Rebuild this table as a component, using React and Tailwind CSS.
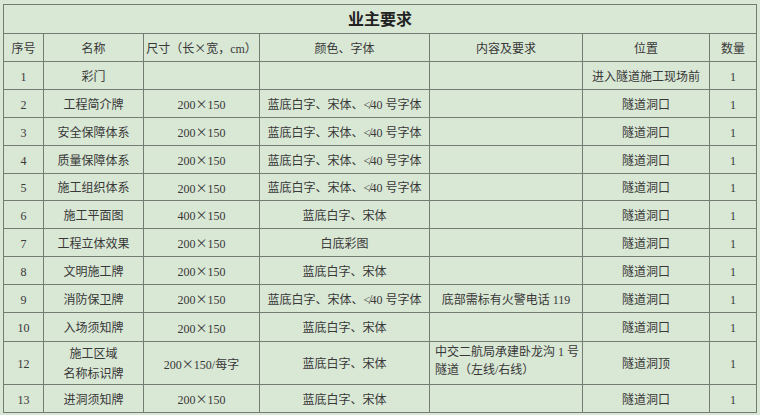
const X = () => (
  <span style={{ fontFamily: '"Noto Sans CJK SC", sans-serif' }}>×</span>
);

function Size({ v }) {
  if (!v) return null;
  const parts = v.split("×");
  return (
    <>
      {parts[0]}
      <X />
      {parts[1]}
    </>
  );
}

export default function App() {
  const rows = [
    ["1", "彩门", "", "", "", "进入隧道施工现场前", "1", 28],
    ["2", "工程简介牌", "200×150", "蓝底白字、宋体、≮40 号字体", "", "隧道洞口", "1", 28],
    ["3", "安全保障体系", "200×150", "蓝底白字、宋体、≮40 号字体", "", "隧道洞口", "1", 28],
    ["4", "质量保障体系", "200×150", "蓝底白字、宋体、≮40 号字体", "", "隧道洞口", "1", 28],
    ["5", "施工组织体系", "200×150", "蓝底白字、宋体、≮40 号字体", "", "隧道洞口", "1", 27],
    ["6", "施工平面图", "400×150", "蓝底白字、宋体", "", "隧道洞口", "1", 28],
    ["7", "工程立体效果", "200×150", "白底彩图", "", "隧道洞口", "1", 28],
    ["8", "文明施工牌", "200×150", "蓝底白字、宋体", "", "隧道洞口", "1", 28],
    ["9", "消防保卫牌", "200×150", "蓝底白字、宋体、≮40 号字体", "底部需标有火警电话 119", "隧道洞口", "1", 28],
    ["10", "入场须知牌", "200×150", "蓝底白字、宋体", "", "隧道洞口", "1", 29],
  ];
  const td = "border border-[#737b72] text-center align-middle p-0 pt-[2px]";
  return (
    <div
      className="w-[760px] h-[415px] bg-[#d9e7d5] pl-[3px] pt-[4px] text-[#383838] text-[12px] overflow-hidden"
      style={{ fontFamily: '"Liberation Serif", "Noto Sans CJK SC", serif' }}
    >
      <table className="table-fixed border-collapse w-[753px] border border-[#6b7369]">
        <colgroup>
          <col className="w-[40px]" />
          <col className="w-[100px]" />
          <col className="w-[116px]" />
          <col className="w-[170px]" />
          <col className="w-[153px]" />
          <col className="w-[127px]" />
          <col className="w-[47px]" />
        </colgroup>
        <tbody>
          <tr className="h-[29px]">
            <td colSpan={7} className="border border-[#737b72] text-center align-middle p-0 pt-[2px] text-[16px] leading-[20px] font-bold text-[#222]">
              业主要求
            </td>
          </tr>
          <tr className="h-[28px]">
            <td className={td}>序号</td>
            <td className={td}>名称</td>
            <td className={td}>
              尺寸（长<X />宽，cm）
            </td>
            <td className={td}>颜色、字体</td>
            <td className={td}>内容及要求</td>
            <td className={td}>位置</td>
            <td className={td}>数量</td>
          </tr>
          {rows.map((r) => (
            <tr key={r[0]} style={{ height: r[7] }}>
              <td className={td}>{r[0]}</td>
              <td className={td}>{r[1]}</td>
              <td className={td}>
                <Size v={r[2]} />
              </td>
              <td className={td}>{r[3]}</td>
              <td className={td}>{r[4]}</td>
              <td className={td}>{r[5]}</td>
              <td className={td}>{r[6]}</td>
            </tr>
          ))}
          <tr className="h-[42px]">
            <td className={td}>12</td>
            <td className={td + " leading-[20px]"}>
              施工区域
              <br />
              名称标识牌
            </td>
            <td className={td}>
              200<X />150/每字
            </td>
            <td className={td}>蓝底白字、宋体</td>
            <td className="border border-[#737b72] text-left align-top pl-[5px] pt-[1px] leading-[18px]">
              中交二航局承建卧龙沟 1 号
              <br />
              隧道（左线/右线）
            </td>
            <td className={td}>隧道洞顶</td>
            <td className={td}>1</td>
          </tr>
          <tr className="h-[28px]">
            <td className={td}>13</td>
            <td className={td}>进洞须知牌</td>
            <td className={td}>
              200<X />150
            </td>
            <td className={td}>蓝底白字、宋体</td>
            <td className={td}></td>
            <td className={td}>隧道洞口</td>
            <td className={td}>1</td>
          </tr>
        </tbody>
      </table>
    </div>
  );
}
